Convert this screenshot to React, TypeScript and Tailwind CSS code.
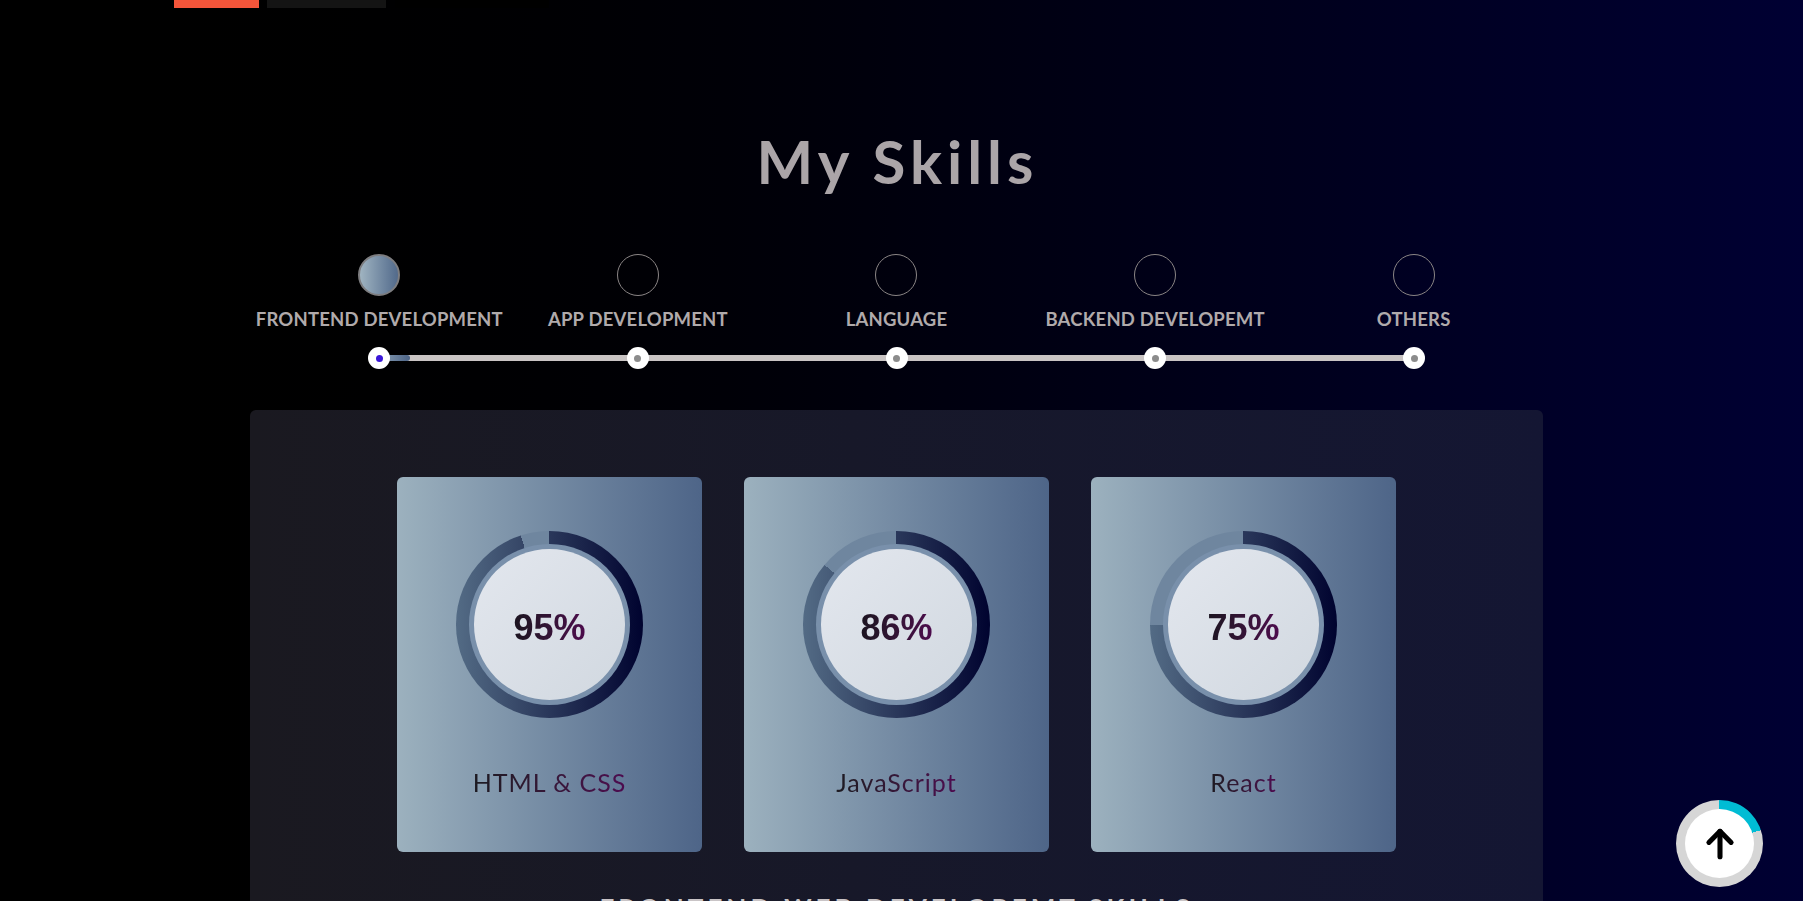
import React from "react";

type Skill = { name: React.ReactNode; percent: number };

const tabs = [
  "FRONTEND DEVELOPMENT",
  "APP DEVELOPMENT",
  "LANGUAGE",
  "BACKEND DEVELOPEMT",
  "OTHERS",
];

const skills: Skill[] = [
  { name: "HTML & CSS", percent: 95 },
  { name: "JavaScript", percent: 86 },
  { name: "React", percent: 75 },
];

function SkillCard({ skill }: { skill: Skill }) {
  const p = skill.percent;
  return (
    <div className="w-[305px] h-[375px] rounded-md bg-linear-to-r from-[#9cb1be] to-[#4e6588] flex flex-col items-center pt-[54px]">
      <div
        className="w-[187px] h-[187px] rounded-full flex items-center justify-center"
        style={{
          background: `conic-gradient(transparent 0 ${p}%, #6f869f ${p}% 100%), linear-gradient(to right, #536b85, #00032f)`,
        }}
      >
        <div className="w-[161px] h-[161px] rounded-full bg-[#7990ab] flex items-center justify-center">
          <div className="w-[151px] h-[151px] rounded-full bg-linear-to-br from-[#e3e7ee] to-[#d1d8e0] flex items-center justify-center">
            <span className="mt-[6px] font-['Liberation_Sans',Arial,sans-serif] font-bold text-[36px] leading-none bg-linear-to-r from-[#1b1420] to-[#4c0a4c] bg-clip-text text-transparent">
              {p}%
            </span>
          </div>
        </div>
      </div>
      <p className="mt-[49px] font-['Lato',sans-serif] text-[25px] leading-[30px] tracking-[1px] bg-linear-to-r from-[#1c1a21] to-[#4d0a4f] bg-clip-text text-transparent">
        {skill.name}
      </p>
    </div>
  );
}

export default function App() {
  return (
    <div className="h-screen overflow-hidden bg-linear-to-r from-[#000000] to-[#000033] font-['Lato',sans-serif]">
      <div className="flex h-[8px] ml-[174px]">
        <div className="w-[85px] bg-[#f4553a]" />
        <div className="w-[119px] ml-[8px] bg-[#141414]" />
        <div className="w-[154px] ml-[9px] bg-[#000000]" />
      </div>

      <h1 className="mt-[123px] text-center text-[60px] leading-none font-bold tracking-[5px] text-[#aba5a8] ml-[-8px]">
        My Skills
      </h1>

      <div className="ml-[250px] w-[1293px]">
        <div className="grid grid-cols-5 mt-[63px]">
          {tabs.map((t, i) => (
            <div key={t} className="flex flex-col items-center">
              <div
                className={
                  i === 0
                    ? "w-[42px] h-[42px] rounded-full border-2 border-[#7d7d80] bg-linear-to-r from-[#a0b4c1] to-[#526a8b]"
                    : "w-[42px] h-[42px] rounded-full border-[1.5px] border-[#8a8585]"
                }
              />
              <p className="mt-[11px] text-[18.5px] leading-[24px] font-bold tracking-[0.2px] text-[#b0aaab] whitespace-nowrap">
                {t}
              </p>
            </div>
          ))}
        </div>

        <div className="relative mx-[118px] mt-[16px] h-[22px] flex justify-between items-center">
          <div className="absolute left-[11px] right-[11px] top-[8px] h-[6px] rounded-full bg-[#c9c4c4]">
            <div className="w-[31px] h-full rounded-full bg-linear-to-r from-[#8ca1b6] to-[#4d6487]" />
          </div>
          {tabs.map((t, i) => (
            <div
              key={t}
              className="relative w-[22px] h-[22px] rounded-full bg-white flex items-center justify-center"
            >
              <div
                className={
                  i === 0
                    ? "w-[7px] h-[7px] rounded-full bg-[#3a16d8]"
                    : "w-[7px] h-[7px] rounded-full bg-[#8c8c8c]"
                }
              />
            </div>
          ))}
        </div>

        <div className="mt-[41px] rounded-md bg-linear-to-r from-[#1a1920] to-[#141633] pt-[67px] pb-[60px]">
          <div className="flex justify-center gap-[42px]">
            {skills.map((s) => (
              <SkillCard key={s.percent} skill={s} />
            ))}
          </div>
          <p className="mt-[43px] text-center text-[26px] leading-none font-bold tracking-[4px] text-[#c9c4c6]">
            FRONTEND WEB DEVELOPEMT SKILLS
          </p>
        </div>
      </div>

      <button className="fixed right-[40px] bottom-[14px] w-[87px] h-[87px] rounded-full bg-[conic-gradient(#00bcd4_0_20%,#d6d6d6_20%_100%)] flex items-center justify-center">
        <span className="w-[69px] h-[69px] rounded-full bg-white flex items-center justify-center">
          <svg
            width="38"
            height="38"
            viewBox="0 0 24 24"
            fill="none"
            stroke="black"
            strokeWidth="3.2"
            strokeLinecap="round"
            strokeLinejoin="round"
          >
            <path d="M12 20V4" />
            <path d="M5 11l7-7 7 7" />
          </svg>
        </span>
      </button>
    </div>
  );
}
